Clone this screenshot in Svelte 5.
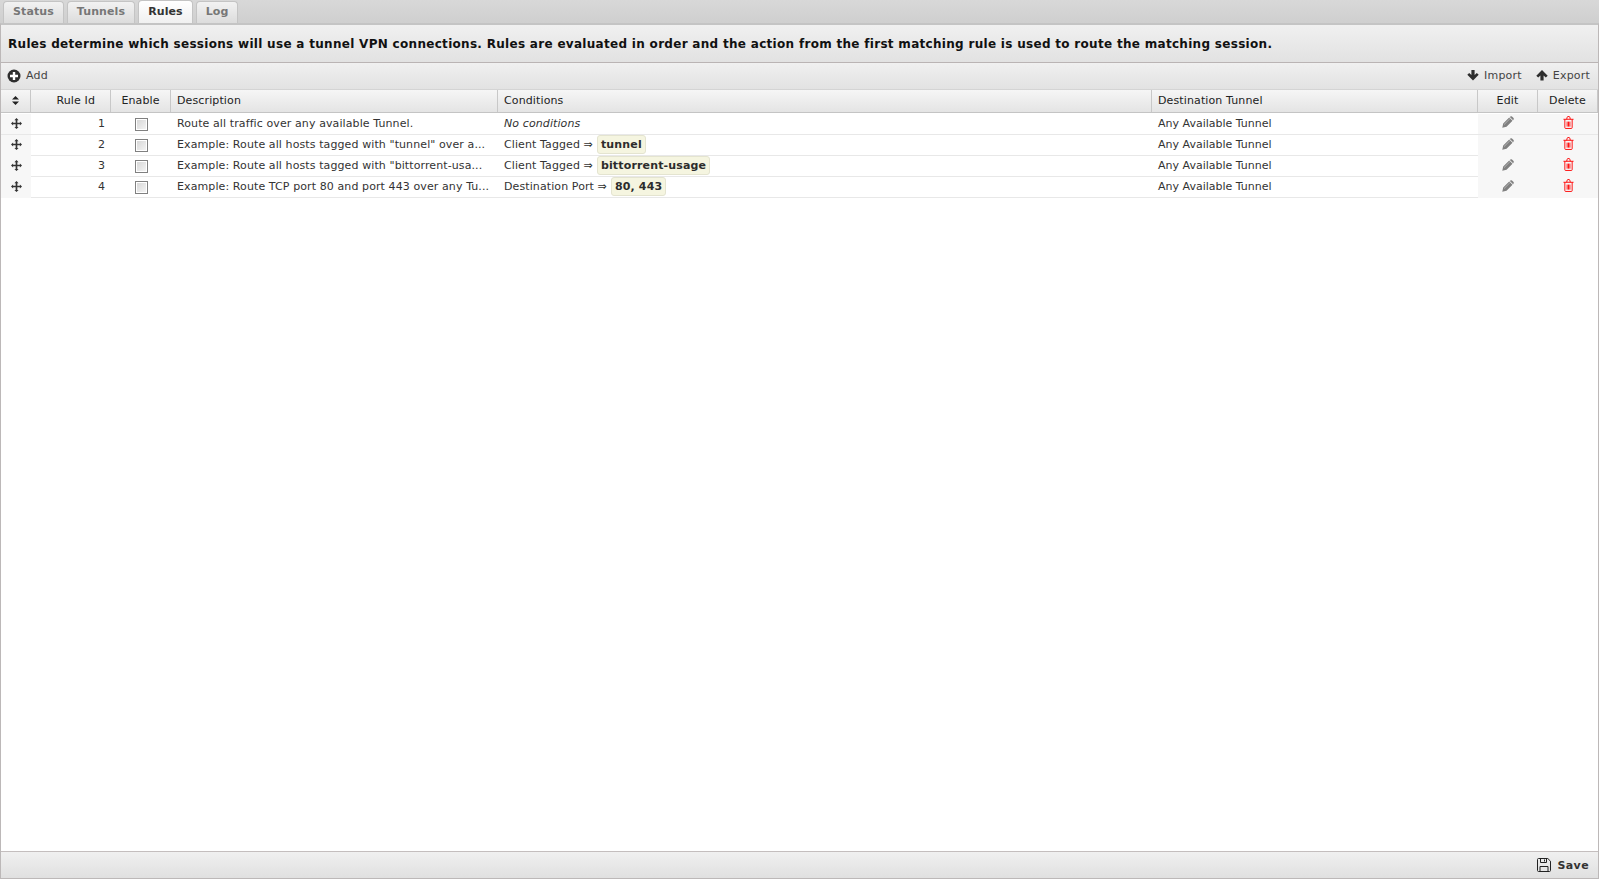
<script>
  const tabs = ['Status', 'Tunnels', 'Rules', 'Log'];
  const rules = [
    { id: 1, description: 'Route all traffic over any available Tunnel.', none: true },
    { id: 2, description: 'Example: Route all hosts tagged with "tunnel" over a...', label: 'Client Tagged', value: 'tunnel' },
    { id: 3, description: 'Example: Route all hosts tagged with "bittorrent-usa...', label: 'Client Tagged', value: 'bittorrent-usage' },
    { id: 4, description: 'Example: Route TCP port 80 and port 443 over any Tu...', label: 'Destination Port', value: '80, 443' }
  ];
</script>

<div class="app">
  <div class="tabbar">
    {#each tabs as tab}
      <div class="tab" class:active={tab === 'Rules'}>{tab}</div>
    {/each}
  </div>

  <div class="panel">
    <div class="intro">Rules determine which sessions will use a tunnel VPN connections. Rules are evaluated in order and the action from the first matching rule is used to route the matching session.</div>

    <div class="toolbar">
      <div class="tool">
        <svg width="14" height="14" viewBox="0 0 14 14"><circle cx="7" cy="7" r="6.5" fill="#2e2e2e"/><path d="M5.800 3h2.400v2.800H11v2.400H8.200V11H5.800V8.200H3V5.800h2.800z" fill="#fff"/></svg>
        Add
      </div>
      <div class="spacer"></div>
      <div class="tool">
        <svg width="12" height="11" viewBox="0 0 12 11"><path d="M4.400 0h3.200v5l2.200-2.100L11.700 4.800 6 10.500.3 4.800 2.200 2.900 4.400 5z" fill="#2e2e2e"/></svg>
        Import
      </div>
      <div class="tool">
        <svg width="12" height="11" viewBox="0 0 12 11"><path d="M4.400 10.500h3.200v-5l2.200 2.100 1.900-1.900L6 0 .3 5.700l1.900 1.900 2.200-2.100z" fill="#2e2e2e"/></svg>
        Export
      </div>
    </div>

    <div class="grid head">
      <div class="cell center">
        <svg width="7" height="9" viewBox="0 0 7 9"><path d="M3.500 0L7 3.600H0zM3.500 9L0 5.400h7z" fill="#222"/></svg>
      </div>
      <div class="cell right idhead">Rule Id</div>
      <div class="cell center">Enable</div>
      <div class="cell">Description</div>
      <div class="cell">Conditions</div>
      <div class="cell">Destination Tunnel</div>
      <div class="cell center">Edit</div>
      <div class="cell center">Delete</div>
    </div>

    <div class="rows">
      {#each rules as rule}
        <div class="grid row">
          <div class="cell center shade">
            <svg width="11" height="11" viewBox="0 0 13 13"><path d="M6.500 0l2.500 2.600H7.500v3h3V4L13 6.500 10.500 9V7.500h-3v3H9L6.500 13 4 10.500h1.500v-3h-3V9L0 6.500 2.500 4v1.600h3v-3H4z" fill="#333"/></svg>
          </div>
          <div class="cell right">{rule.id}</div>
          <div class="cell center"><span class="check"></span></div>
          <div class="cell desc">{rule.description}</div>
          <div class="cell">
            {#if rule.none}
              <em>No conditions</em>
            {:else}
              <span>{rule.label} ⇒</span><span class="tag">{rule.value}</span>
            {/if}
          </div>
          <div class="cell dest">Any Available Tunnel</div>
          <div class="cell center shade">
            <svg class="lift" width="12" height="12" viewBox="0 0 13 13"><path d="M9 .5l1.500-.3 2.300 2.300-.3 1.500-.5.500L8.500 1zM7.800 1.600l3.600 3.600-6.500 6.500-4.600 1 1-4.600z" fill="#808080"/><path d="M2.200 9.300l6.300-6.300" stroke="#c4c4c4" stroke-width=".8" fill="none"/></svg>
          </div>
          <div class="cell center shade">
            <svg class="lift" width="11" height="13" viewBox="0 0 12 14" fill="none" stroke="#f00"><path d="M.5 3.500h11M2 3.500v9.200c0 .5.300.8.800.8h6.400c.5 0 .8-.3.800-.8V3.500M4 3.500l.6-2.300c.1-.4.300-.7.700-.7h1.400c.4 0 .6.300.7.700L8 3.500M4.500 6v5.500M6 6v5.500M7.500 6v5.500"/></svg>
          </div>
        </div>
      {/each}
    </div>

    <div class="footer">
      <div class="save">
        <svg width="14" height="14" viewBox="0 0 14 14" fill="none" stroke="#222"><path d="M.5 1.500c0-.6.400-1 1-1h9.300l2.700 2.700v9.300c0 .6-.4 1-1 1h-11c-.6 0-1-.4-1-1zM3.500.5v4h6v-4M7.500 1.500v2M3 13.500V8.500h8v5"/></svg>
        Save
      </div>
    </div>
  </div>
</div>

<style>
  :global(body) {
    margin: 0;
    font-family: "DejaVu Sans", sans-serif;
    font-size: 11px;
    color: #333;
  }

  .app {
    height: 879px;
    display: flex;
    flex-direction: column;
    overflow: hidden;
    background: #fff;
  }

  .tabbar {
    display: flex;
    gap: 3px;
    height: 23px;
    padding-left: 3px;
    box-sizing: border-box;
    flex: none;
    background: linear-gradient(#d8d8d8, #cfcfcf);
  }

  .tab {
    height: 22px;
    margin-top: 1px;
    padding: 0 9px;
    line-height: 19px;
    box-sizing: border-box;
    font-weight: bold;
    letter-spacing: 0.1px;
    color: #777;
    border: 1px solid #c4c4c4;
    border-bottom: 0;
    border-radius: 4px 4px 0 0;
    background: linear-gradient(#f2f2f2, #dcdcdc);
  }

  .tab.active {
    color: #333;
    height: 23px;
    margin-top: 0;
    line-height: 21px;
    background: linear-gradient(#fff, #f0f0f0);
  }

  .panel {
    flex: 1;
    display: flex;
    flex-direction: column;
    min-height: 0;
    border: 1px solid #bcb8b8;
    border-top: 2px solid #c4c4c4;
  }

  .intro {
    height: 38px;
    line-height: 38px;
    padding-left: 7px;
    flex: none;
    box-sizing: border-box;
    font-size: 12px;
    letter-spacing: 0.3px;
    font-weight: bold;
    color: #111;
    background: linear-gradient(#f0f0f0, #e2e2e2);
    border-bottom: 1px solid #bab4b4;
    white-space: nowrap;
  }

  .toolbar {
    height: 26px;
    flex: none;
    display: flex;
    align-items: center;
    gap: 14px;
    padding: 0 8px 1px 6px;
    box-sizing: border-box;
    background: linear-gradient(#f0f0f0, #e2e2e2);
    letter-spacing: 0.2px;
  }

  .spacer {
    flex: 1;
  }

  .tool {
    display: flex;
    align-items: center;
    gap: 5px;
    color: #444;
  }

  .grid {
    display: grid;
    grid-template-columns: 30px 80px 60px 327px 654px 326px 60px 1fr;
  }

  .head {
    height: 24px;
    flex: none;
    background: linear-gradient(#f6f6f6, #e4e4e4);
    border-top: 1px solid #d4d4d4;
    border-bottom: 1px solid #c4c4c4;
    box-sizing: border-box;
    color: #222;
    letter-spacing: 0.12px;
  }

  .head .cell {
    border-right: 1px solid #c8c8c8;
    padding-bottom: 2px;
  }

  .head .idhead {
    padding-right: 15px;
  }

  .row {
    height: 21px;
    box-sizing: border-box;
    border-bottom: 1px solid #e8e8e8;
    letter-spacing: 0.1px;
  }

  .row .cell {
    padding-bottom: 2px;
  }

  .row .shade {
    padding-bottom: 0;
  }

  .row .desc {
    letter-spacing: 0.1px;
  }

  .row .dest {
    letter-spacing: 0;
  }

  .cell {
    display: flex;
    align-items: center;
    padding: 0 6px;
    box-sizing: border-box;
    min-width: 0;
    white-space: nowrap;
  }

  .center {
    justify-content: center;
    padding: 0;
  }

  .right {
    justify-content: flex-end;
  }

  .shade {
    background: #f7f7f7;
  }

  .row .shade svg {
    margin-bottom: 2px;
  }

  .row .shade .lift {
    margin-bottom: 4px;
  }

  .check {
    width: 13px;
    height: 13px;
    box-sizing: border-box;
    margin-top: 2px;
    border: 1px solid #808080;
    background: linear-gradient(135deg, #d4d4d4, #f6f6f6);
    box-shadow: inset 0 0 0 1px #fff;
  }

  .tag {
    margin-left: 4px;
    padding: 0 3px;
    height: 17px;
    line-height: 17px;
    font-weight: bold;
    letter-spacing: 0.15px;
    color: #2c2c2c;
    background: #f5f5e0;
    border: 1px solid #e4e4d0;
    border-radius: 3px;
  }

  .rows {
    flex: 1;
    min-height: 0;
    padding-top: 1px;
  }

  .footer {
    height: 27px;
    flex: none;
    display: flex;
    justify-content: flex-end;
    align-items: center;
    padding-right: 9px;
    box-sizing: border-box;
    border-top: 1px solid #c4bebe;
    background: linear-gradient(#f0f0f0, #e0e0e0);
  }

  .save {
    display: flex;
    align-items: center;
    gap: 6px;
    font-weight: bold;
    letter-spacing: 0.4px;
    color: #333;
  }
</style>
